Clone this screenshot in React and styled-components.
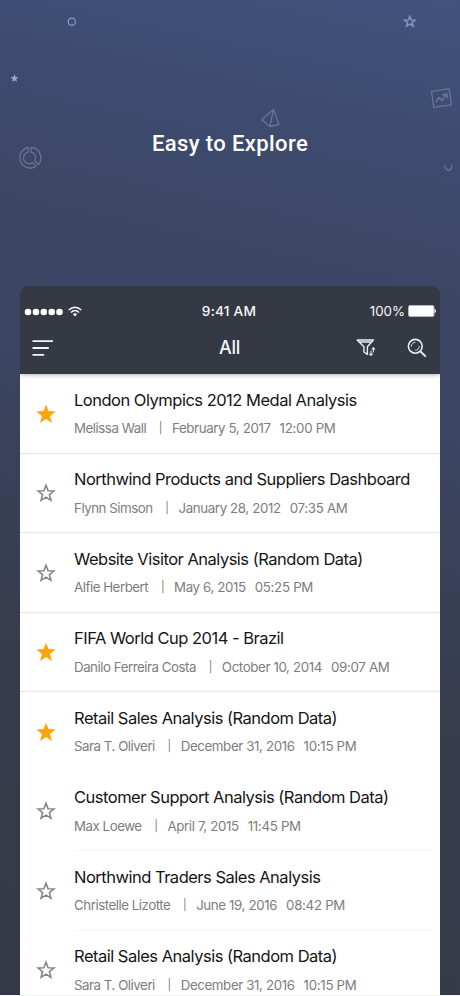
import React from 'react'
import styled, { createGlobalStyle } from 'styled-components'

const reports = [
  { title: 'London Olympics 2012 Medal Analysis', author: 'Melissa Wall', date: 'February 5, 2017', time: '12:00 PM', starred: true, line: 'full' },
  { title: 'Northwind Products and Suppliers Dashboard', author: 'Flynn Simson', date: 'January 28, 2012', time: '07:35 AM', starred: false, line: 'full' },
  { title: 'Website Visitor Analysis (Random Data)', author: 'Alfie Herbert', date: 'May 6, 2015', time: '05:25 PM', starred: false, line: 'full' },
  { title: 'FIFA World Cup 2014 - Brazil', author: 'Danilo Ferreira Costa', date: 'October 10, 2014', time: '09:07 AM', starred: true, line: 'full' },
  { title: 'Retail Sales Analysis (Random Data)', author: 'Sara T. Oliveri', date: 'December 31, 2016', time: '10:15 PM', starred: true, line: 'none' },
  { title: 'Customer Support Analysis (Random Data)', author: 'Max Loewe', date: 'April 7, 2015', time: '11:45 PM', starred: false, line: 'inset' },
  { title: 'Northwind Traders Sales Analysis', author: 'Christelle Lizotte', date: 'June 19, 2016', time: '08:42 PM', starred: false, line: 'inset' },
  { title: 'Retail Sales Analysis (Random Data)', author: 'Sara T. Oliveri', date: 'December 31, 2016', time: '10:15 PM', starred: false, line: 'none' },
]

const starPoints = '10,0.4 12.4,7.1 19.7,7.4 14,11.9 16,19.1 10,15 4,19.1 6,11.9 0.3,7.4 7.6,7.1'

const Star = ({ filled }) => (
  <svg width="20" height="20" viewBox="0 0 20 20">
    {filled ? (
      <polygon points={starPoints} fill="#ffa30a" />
    ) : (
      <polygon points="10,2.2 12.1,7.7 17.9,8 13.4,11.6 14.9,17.3 10,14.1 5.1,17.3 6.6,11.6 2.1,8 7.9,7.7" fill="none" stroke="#858585" strokeWidth="1.6" />
    )}
  </svg>
)

const Decorations = () => (
  <Backdrop width="460" height="190" viewBox="0 0 460 190" fill="none">
    <circle cx="71.8" cy="21.8" r="3.6" stroke="#8c9bc7" strokeWidth="1.2" />
    <polygon points="14.5,74.1 15.5,77.1 18.6,77.2 16.2,79.1 17,82 14.5,80.3 12,82 12.8,79.1 10.4,77.2 13.5,77.1" fill="#9ba9d3" />
    <polygon points="409.8,16.3 411.2,19.9 415,20.1 412.1,22.5 413.1,26.1 409.8,24.1 406.5,26.1 407.5,22.5 404.6,20.1 408.4,19.9" stroke="#8795c1" strokeWidth="1.5" />
    <g stroke="#6b7799" strokeWidth="1.2" strokeLinejoin="round">
      <path d="M28.3 147.3A10.5 10.5 0 1 0 36.2 166.3L32.7 162.6A5.8 5.8 0 1 1 28.3 152.2Z" />
      <path d="M31.1 147.3A10.5 10.5 0 0 1 38.4 164.5L34.7 160.8A5.8 5.8 0 0 0 31.1 152.2Z" />
      <path d="M273.5 109.5L261.8 119.7L269.8 126.6L279 124.4ZM273.5 109.5L269.8 126.6" />
      <path d="M431.5 91.5L449.3 88.7L451.4 104.8L433.7 107.4Z" />
      <path d="M436.2 102L439 97.6L442 100.4L446.5 94.3M442.3 95L446.8 94.1L447.4 98.2" strokeWidth="1.5" />
      <path d="M445.1 165.3A3.5 3.5 0 1 0 451.2 164.6" />
    </g>
  </Backdrop>
)

const SignalDots = () => (
  <svg width="40" height="8" viewBox="0 0 40 8" fill="#fff">
    {[4, 11.9, 19.8, 27.7, 35.5].map((x) => <circle key={x} cx={x} cy="4" r="3.3" />)}
  </svg>
)

const WifiIcon = () => (
  <svg width="14" height="11" viewBox="0 0 14 11" fill="none" stroke="#fff" strokeWidth="1.4">
    <path d="M.7 4.1Q7-1.8 13.3 4.1M2.9 6.4Q7 2.7 11.1 6.4" />
    <path d="M4.8 8.1Q7 6.2 9.2 8.1L7 10.6Z" fill="#fff" stroke="none" />
  </svg>
)

const MenuIcon = () => (
  <svg width="22" height="18" viewBox="0 0 22 18" stroke="#f0f4fb" strokeWidth="1.8">
    <path d="M.5 2.2H21M.5 9H16.8M.5 15.8H12.2" />
  </svg>
)

const FilterIcon = () => (
  <svg width="20" height="20" viewBox="0 0 20 20" fill="none" stroke="#e8edf5" strokeLinejoin="round">
    <path d="M1.2 2H17.4L11.4 8.7V16.4L7.9 14V8.7L1.2 2ZM2.8 4H15.8" strokeWidth="1.4" />
    <path d="M17.4 9.8V14.6M15.8 11.5L17.4 9.7L19 11.5M15 12.7V17.4M13.4 15.7L15 17.5L16.6 15.7" strokeWidth="1.1" />
  </svg>
)

const SearchIcon = () => (
  <svg width="20" height="20" viewBox="0 0 20 20" fill="none" stroke="#e8edf5">
    <circle cx="8.3" cy="8.3" r="6.9" strokeWidth="1.6" />
    <path d="M13.3 13.3L18.8 18.6" strokeWidth="1.9" />
    <path d="M4.3 8.5A4.1 4.1 0 0 1 8.4 4.3M12.3 8.1A4.1 4.1 0 0 1 8.2 12.3" strokeWidth=".9" />
  </svg>
)

const BatteryIcon = () => (
  <svg width="28" height="12" viewBox="0 0 28 12">
    <rect x=".5" y=".5" width="25.5" height="11" rx="1.5" fill="#fff" stroke="#aeb3bc" />
    <path d="M26.5 4Q28 4.4 28 6T26.5 8Z" fill="#fff" />
  </svg>
)

const App = () => {
  return (
    <>
      <GlobalStyle />
      <Page>
        <Decorations />
        <Headline>Easy to Explore</Headline>
        <Phone>
          <Header>
            <StatusBar>
              <Signal>
                <SignalDots />
                <WifiIcon />
              </Signal>
              <Clock>9:41 AM</Clock>
              <Battery>
                <span>100%</span>
                <BatteryIcon />
              </Battery>
            </StatusBar>
            <NavBar>
              <NavButton aria-label="Menu"><MenuIcon /></NavButton>
              <NavTitle>All</NavTitle>
              <Actions>
                <NavButton aria-label="Filter"><FilterIcon /></NavButton>
                <NavButton aria-label="Search"><SearchIcon /></NavButton>
              </Actions>
            </NavBar>
          </Header>
          <List>
            {reports.map((report, index) => (
              <Row key={index}>
                <StarCell><Star filled={report.starred} /></StarCell>
                <RowBody>
                  <RowTitle>{report.title}</RowTitle>
                  <Meta>
                    <Author>{report.author}</Author>
                    <Separator>|</Separator>
                    <span>{report.date}</span>
                    <Time>{report.time}</Time>
                  </Meta>
                </RowBody>
                <Divider $line={report.line} />
              </Row>
            ))}
          </List>
        </Phone>
      </Page>
    </>
  )
}

const GlobalStyle = createGlobalStyle`
  body {
    margin: 0;
    overflow: hidden;
    background: #f4f4f5;
  }
  * {
    box-sizing: border-box;
  }
`;

const Page = styled.div`
  position: relative;
  display: flex;
  flex-direction: column;
  height: 995px;
  padding: 0 20px;
  overflow: hidden;
  font-family: Inter, "Liberation Sans", sans-serif;
  background: linear-gradient(192deg, #40527d 0%, #3e4c70 13%, #3d4766 25%, #3b4460 42%, #373c4c 68%, #353a49 100%);
`;

const Backdrop = styled.svg`
  position: absolute;
  top: 0;
  left: 0;
`;

const Headline = styled.h1`
  flex: none;
  height: 286px;
  margin: 0;
  padding-top: 129px;
  color: #fff;
  font: 500 22px/30px Roboto, sans-serif;
  letter-spacing: 0.4px;
  text-align: center;
`;

const Phone = styled.main`
  flex: 1;
  min-height: 0;
  border-radius: 9px 9px 0 0;
  background: #353944;
  overflow: hidden;
`;

const Header = styled.header`
  position: relative;
  height: 88px;
  padding-top: 14px;
  color: #f5f7fb;
  background: #353944;
  box-shadow: 0 1px 4px rgba(0, 0, 0, 0.3);
`;

const StatusBar = styled.div`
  display: grid;
  grid-template-columns: 1fr auto 1fr;
  align-items: center;
  height: 23px;
  padding: 0 4px;
`;

const Signal = styled.div`
  display: flex;
  align-items: center;
  gap: 4px;
`;

const Clock = styled.div`
  padding: 0 2px 1px 0;
  font-size: 13.7px;
  font-weight: 500;
  letter-spacing: 0.2px;
`;

const Battery = styled.div`
  display: flex;
  align-items: center;
  justify-content: flex-end;
  gap: 3px;
  padding-bottom: 1px;
  font-size: 13.3px;
`;

const NavBar = styled.nav`
  display: grid;
  grid-template-columns: 1fr auto 1fr;
  align-items: center;
  height: 50px;
  padding: 0 13px 0 12px;
`;

const NavTitle = styled.div`
  padding-bottom: 2px;
  font-size: 18px;
  font-weight: 500;
  letter-spacing: -0.3px;
`;

const NavButton = styled.button`
  display: flex;
  width: fit-content;
  padding: 0;
  border: 0;
  background: none;
`;

const Actions = styled.div`
  display: flex;
  justify-content: flex-end;
  gap: 31px;
`;

const List = styled.div`
  display: flex;
  flex-direction: column;
  background: #fff;
`;

const Row = styled.article`
  display: grid;
  grid-template-columns: 54px 1fr;
  grid-template-rows: 1fr 1px;
  height: 79.5px;
  flex: none;
`;

const StarCell = styled.div`
  padding: 29.6px 0 0 15.7px;
`;

const RowBody = styled.div`
  padding-top: 13.7px;
  white-space: nowrap;
`;

const RowTitle = styled.h2`
  margin: 0;
  color: #151515;
  font-size: 16.5px;
  font-weight: 400;
  line-height: 24px;
  letter-spacing: -0.5px;
`;

const Meta = styled.div`
  display: flex;
  margin-top: 7.4px;
  color: #7d7d7d;
  font-size: 13.3px;
  line-height: 19px;
  letter-spacing: -0.38px;
`;

const Author = styled.span`
  letter-spacing: -0.47px;
`;

const Separator = styled.span`
  width: 4px;
  margin: 0 9.5px 0 12.3px;
  font-size: 11px;
  text-align: center;
`;

const Time = styled.span`
  margin-left: 9px;
  letter-spacing: -0.3px;
`;

const Divider = styled.div`
  grid-column: 1 / -1;
  margin: ${({ $line }) => ($line === 'inset' ? '0 7px 0 54px' : '0')};
  background: ${({ $line }) => ({ full: '#e4e5ea', inset: '#f6f6f6', none: 'transparent' })[$line]};
`;

export default App
